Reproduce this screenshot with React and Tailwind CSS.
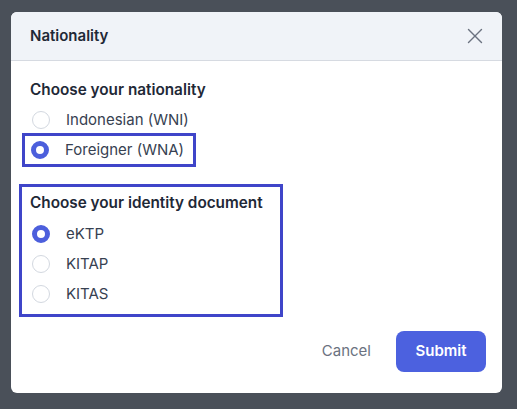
import React, { useState } from "react";
import { X } from "lucide-react";

const Radio = ({ checked }) => (
  <span
    className={
      checked
        ? "w-[18px] h-[18px] rounded-full border-[5px] border-[#4c5fdc] bg-white shrink-0"
        : "w-[18px] h-[18px] rounded-full border-[1.5px] border-[#d3d8e0] bg-white shrink-0"
    }
  />
);

const Option = ({ label, checked, onClick, className }) => (
  <div
    onClick={onClick}
    className={"flex items-center h-[30px] gap-[16px] cursor-pointer " + (className || "")}
  >
    <Radio checked={checked} />
    <span className="text-[15px] text-[#374151]">{label}</span>
  </div>
);

const App = () => {
  const [nationality, setNationality] = useState("WNA");
  const [doc, setDoc] = useState("eKTP");

  return (
    <div
      className="w-[517px] h-[409px] bg-[#4a5059] pt-[12px] pl-[11px]"
      style={{ fontFamily: "Inter, 'Noto Sans', sans-serif" }}
    >
      <div className="w-[491px] h-[381px] bg-white rounded-[6px] overflow-hidden flex flex-col">
        {/* header */}
        <div className="h-[49px] shrink-0 bg-[#f0f3f8] border-b border-[#d6dae1] flex items-center justify-between pl-[19px] pr-[14px]">
          <h2 className="text-[15px] font-semibold text-[#1f2937]">Nationality</h2>
          <X size={26} strokeWidth={1.3} className="text-[#6b7280]" />
        </div>

        {/* body */}
        <div className="px-[19px] pt-[19px] flex-1">
          <h3 className="text-[15.3px] leading-[20px] font-semibold text-[#1f2937]">
            Choose your nationality
          </h3>
          <div className="mt-[5px] flex flex-col">
            <Option
              label="Indonesian (WNI)"
              checked={nationality === "WNI"}
              onClick={() => setNationality("WNI")}
              className="pl-[2px]"
            />
            <Option
              label="Foreigner (WNA)"
              checked={nationality === "WNA"}
              onClick={() => setNationality("WNA")}
              className="w-fit -ml-[6px] pl-[7px] pr-[10px] outline-[3px] outline-solid outline-[#3f45c9] -outline-offset-1"
            />
          </div>

          <div className="mt-[22px] -ml-[8px] w-[258px] pl-[8px] pt-[6px] pb-[5px] outline-[3px] outline-solid outline-[#3f45c9]">
            <h3 className="text-[15.3px] leading-[20px] font-semibold text-[#1f2937]">
              Choose your identity document
            </h3>
            <div className="mt-[6px] flex flex-col pl-[2px]">
              {["eKTP", "KITAP", "KITAS"].map((d) => (
                <Option key={d} label={d} checked={doc === d} onClick={() => setDoc(d)} />
              ))}
            </div>
          </div>
        </div>

        {/* footer */}
        <div className="flex items-center justify-end gap-[25px] pr-[16px] pb-[21px]">
          <button className="text-[15px] text-[#6b7280]">Cancel</button>
          <button className="w-[90px] h-[41px] rounded-[8px] bg-[#4c61df] text-white text-[15px] font-semibold">
            Submit
          </button>
        </div>
      </div>
    </div>
  );
};

export default App;
